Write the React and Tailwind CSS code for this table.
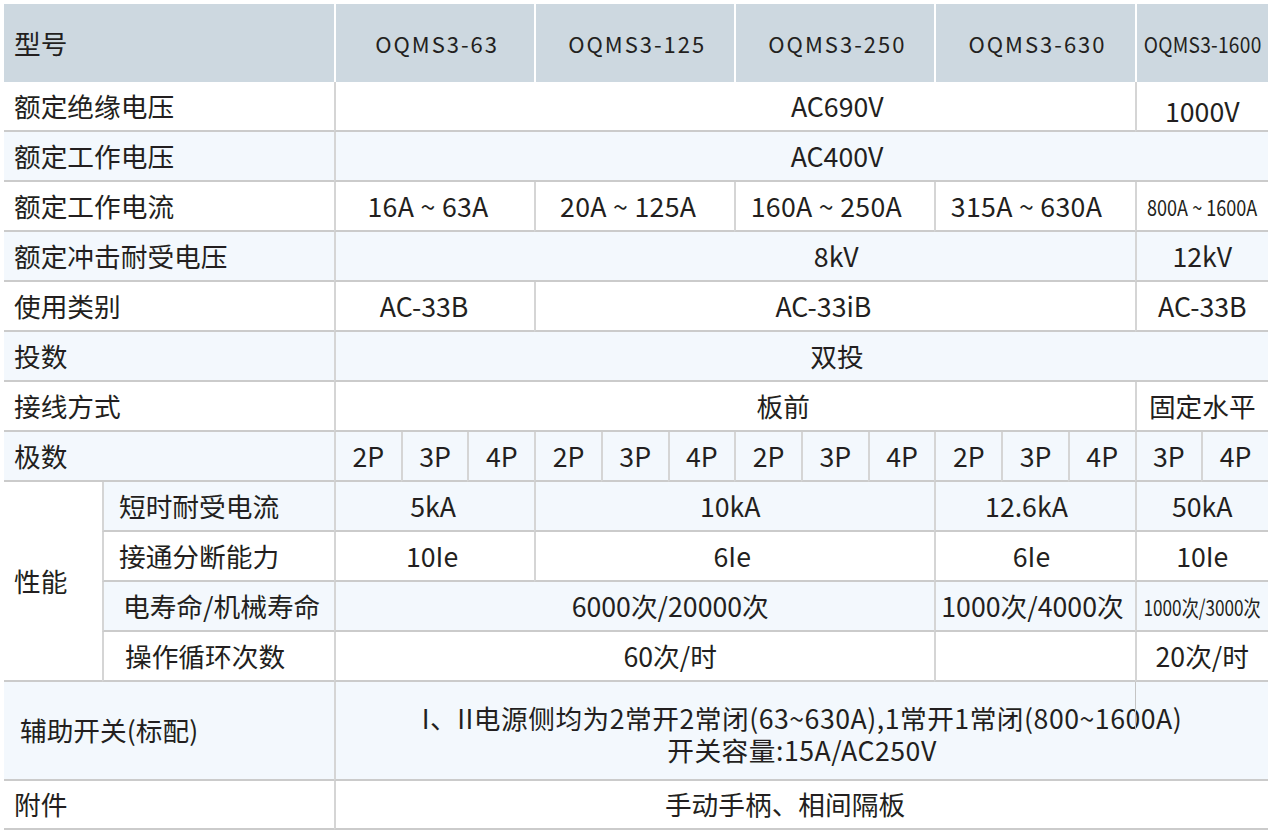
const WHITE = 'bg-white';
const BLUE = 'bg-[#f3f8fd]';

const Cell = ({ span = 'col-span-1', bg = WHITE, first = false, className = 'justify-center', children }) => (
  <div
    className={`${span} ${bg} ${first ? '' : 'border-l-2 border-l-[#d5d5d5]'} flex items-center border-b-2 border-b-[#cbcbcb] ${className}`}
  >
    {children}
  </div>
);

const Label = ({ children, bg, span = 'col-span-2', className = 'pl-[10px]' }) => (
  <Cell first span={span} bg={bg} className={`justify-start ${className}`}>
    {children}
  </Cell>
);

const Sub = ({ children, bg, className = 'pl-[15px]' }) => (
  <Cell bg={bg} className={`justify-start ${className}`}>
    {children}
  </Cell>
);

const Narrow = ({ children, className = 'text-[22px] scale-x-[0.82]' }) => (
  <span className={`inline-block whitespace-pre ${className}`}>{children}</span>
);

const models = ['OQMS3-63', 'OQMS3-125', 'OQMS3-250', 'OQMS3-630'];

export default function App() {
  return (
    <div className="min-h-[836px] bg-white p-[4px] font-['Noto_Sans_CJK_SC','Noto_Sans',sans-serif] text-[26.7px] text-[#231f20]">
      <div className="relative grid w-[1264px] grid-cols-[98px_232px_repeat(14,minmax(0,1fr))] grid-rows-[78px_repeat(12,50px)_99px_49px] leading-none">
        {/* header */}
        <div className="col-span-2 flex items-center bg-[#cdd8e0] pl-[10px]">型号</div>
        {models.map((m) => (
          <div
            key={m}
            className="col-span-3 flex items-center justify-center border-l-2 border-l-white bg-[#cdd8e0] pl-[4px] text-[22px] tracking-[2px]"
          >
            {m}
          </div>
        ))}
        <div className="col-span-2 flex items-center justify-center border-l-2 border-l-white bg-[#cdd8e0]">
          <Narrow className="text-[22px] tracking-[0.3px] scale-x-[0.87]">OQMS3-1600</Narrow>
        </div>

        {/* 额定绝缘电压 */}
        <Label>额定绝缘电压</Label>
        <Cell span="col-span-12" className="justify-center pl-[204px]">AC690V</Cell>
        <Cell span="col-span-2" className="justify-center pt-[10px]">1000V</Cell>

        {/* 额定工作电压 */}
        <Label bg={BLUE}>额定工作电压</Label>
        <Cell span="col-span-14" bg={BLUE} className="justify-center pl-[70px]">AC400V</Cell>

        {/* 额定工作电流 */}
        <Label>额定工作电流</Label>
        <Cell span="col-span-3" className="justify-center pr-[14px] whitespace-pre tracking-[0.3px]">16A ~ 63A</Cell>
        <Cell span="col-span-3" className="justify-center pr-[14px] whitespace-pre tracking-[0.3px]">20A ~ 125A</Cell>
        <Cell span="col-span-3" className="justify-center pr-[18px] whitespace-pre tracking-[0.3px]">160A ~ 250A</Cell>
        <Cell span="col-span-3" className="justify-center pr-[18px] whitespace-pre tracking-[0.3px]">315A ~ 630A</Cell>
        <Cell span="col-span-2">
          <Narrow className="text-[22px] scale-x-[0.82]">800A ~ 1600A</Narrow>
        </Cell>

        {/* 额定冲击耐受电压 */}
        <Label bg={BLUE}>额定冲击耐受电压</Label>
        <Cell span="col-span-12" bg={BLUE} className="justify-center pl-[202px]">8kV</Cell>
        <Cell span="col-span-2" bg={BLUE}>12kV</Cell>

        {/* 使用类别 */}
        <Label>使用类别</Label>
        <Cell span="col-span-3" className="justify-center pr-[22px]">AC-33B</Cell>
        <Cell span="col-span-9" className="justify-center pr-[24px]">AC-33iB</Cell>
        <Cell span="col-span-2">AC-33B</Cell>

        {/* 投数 */}
        <Label bg={BLUE}>投数</Label>
        <Cell span="col-span-14" bg={BLUE} className="justify-center pl-[70px]">双投</Cell>

        {/* 接线方式 */}
        <Label>接线方式</Label>
        <Cell span="col-span-12" className="justify-center pl-[96px]">板前</Cell>
        <Cell span="col-span-2">固定水平</Cell>

        {/* 极数 */}
        <Label bg={BLUE}>极数</Label>
        {['2P', '3P', '4P', '2P', '3P', '4P', '2P', '3P', '4P', '2P', '3P', '4P', '3P', '4P'].map((p, i) => (
          <Cell key={i} bg={BLUE}>
            {p}
          </Cell>
        ))}

        {/* 性能 */}
        <Cell first span="row-span-4" className="justify-start pl-[10px]">性能</Cell>
        <Sub bg={BLUE}>短时耐受电流</Sub>
        <Cell span="col-span-3" bg={BLUE} className="justify-center pr-[4px]">5kA</Cell>
        <Cell span="col-span-6" bg={BLUE} className="justify-center pr-[10px]">10kA</Cell>
        <Cell span="col-span-3" bg={BLUE} className="justify-center pr-[18px]">12.6kA</Cell>
        <Cell span="col-span-2" bg={BLUE}>50kA</Cell>

        <Sub>接通分断能力</Sub>
        <Cell span="col-span-3" className="justify-center pr-[6px]">10Ie</Cell>
        <Cell span="col-span-6" className="justify-center pr-[6px]">6Ie</Cell>
        <Cell span="col-span-3" className="justify-center pr-[8px]">6Ie</Cell>
        <Cell span="col-span-2">10Ie</Cell>

        <Sub bg={BLUE} className="pl-[19px]">电寿命/机械寿命</Sub>
        <Cell span="col-span-9" bg={BLUE} className="justify-center pl-[70px]">6000次/20000次</Cell>
        <Cell span="col-span-3" bg={BLUE} className="justify-center pr-[6px]">1000次/4000次</Cell>
        <Cell span="col-span-2" bg={BLUE}>
          <Narrow className="text-[22px] scale-x-[0.78]">1000次/3000次</Narrow>
        </Cell>

        <Sub className="pl-[21px]">操作循环次数</Sub>
        <Cell span="col-span-9" className="justify-center pl-[70px]">60次/时</Cell>
        <Cell span="col-span-3" />
        <Cell span="col-span-2">20次/时</Cell>

        {/* 辅助开关 */}
        <Label bg={BLUE} className="pl-[16px]">辅助开关(标配)</Label>
        <Cell span="col-span-14" bg={BLUE} className="justify-center pt-[6px]">
          <div className="text-center leading-[32px] tracking-[0.5px]">
            <div>I、II电源侧均为2常开2常闭(63~630A),1常开1常闭(800~1600A)</div>
            <div>开关容量:15A/AC250V</div>
          </div>
        </Cell>

        {/* 附件 */}
        <Label>附件</Label>
        <Cell span="col-span-14" className="justify-center pr-[34px]">手动手柄、相间隔板</Cell>

        {/* stray divider running into the 辅助开关 row */}
        <div className="absolute left-[1131px] top-[678px] h-[48px] w-[1px] bg-[#c4c4c4]" />
      </div>
    </div>
  );
}
